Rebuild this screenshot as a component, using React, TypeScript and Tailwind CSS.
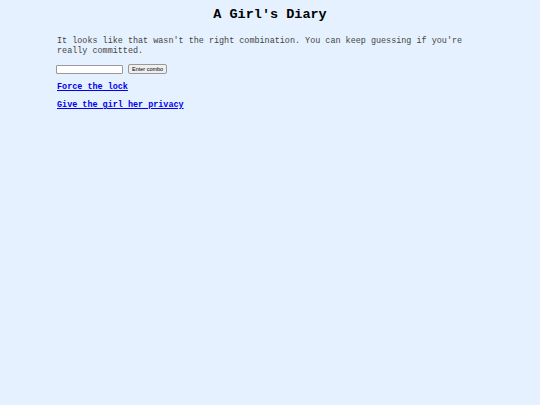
import React from 'react'

export default function App() {
  return (
    <div className="min-h-[405px] bg-[#e5f1fe] font-['Liberation_Mono',monospace] text-[#444]">
      <h1 className="pt-[7px] text-center text-[13.5px] font-bold leading-[16px] text-black">A Girl's Diary</h1>
      <div className="px-[57px] pt-[13px]">
        <p className="text-[8.45px] leading-[10px]">
          It looks like that wasn't the right combination. You can keep guessing if you're really committed.
        </p>
        <div className="mt-[8px] flex items-center gap-[5px]">
          <input
            type="text"
            className="ml-[-1px] h-[9px] w-[67px] rounded-[1px] border border-[#999] bg-white"
          />
          <button className="h-[10px] rounded-[2px] border border-[#999] bg-[#efefef] px-[3px] font-['Liberation_Sans',sans-serif] text-[5.5px] leading-[8px] text-black">
            Enter combo
          </button>
        </div>
        <div className="mt-[8px] text-[8.45px] font-bold leading-[10px]">
          <a href="#" className="text-[#0000ee] underline">Force the lock</a>
        </div>
        <div className="mt-[8px] text-[8.45px] font-bold leading-[10px]">
          <a href="#" className="text-[#0000ee] underline">Give the girl her privacy</a>
        </div>
      </div>
    </div>
  )
}
